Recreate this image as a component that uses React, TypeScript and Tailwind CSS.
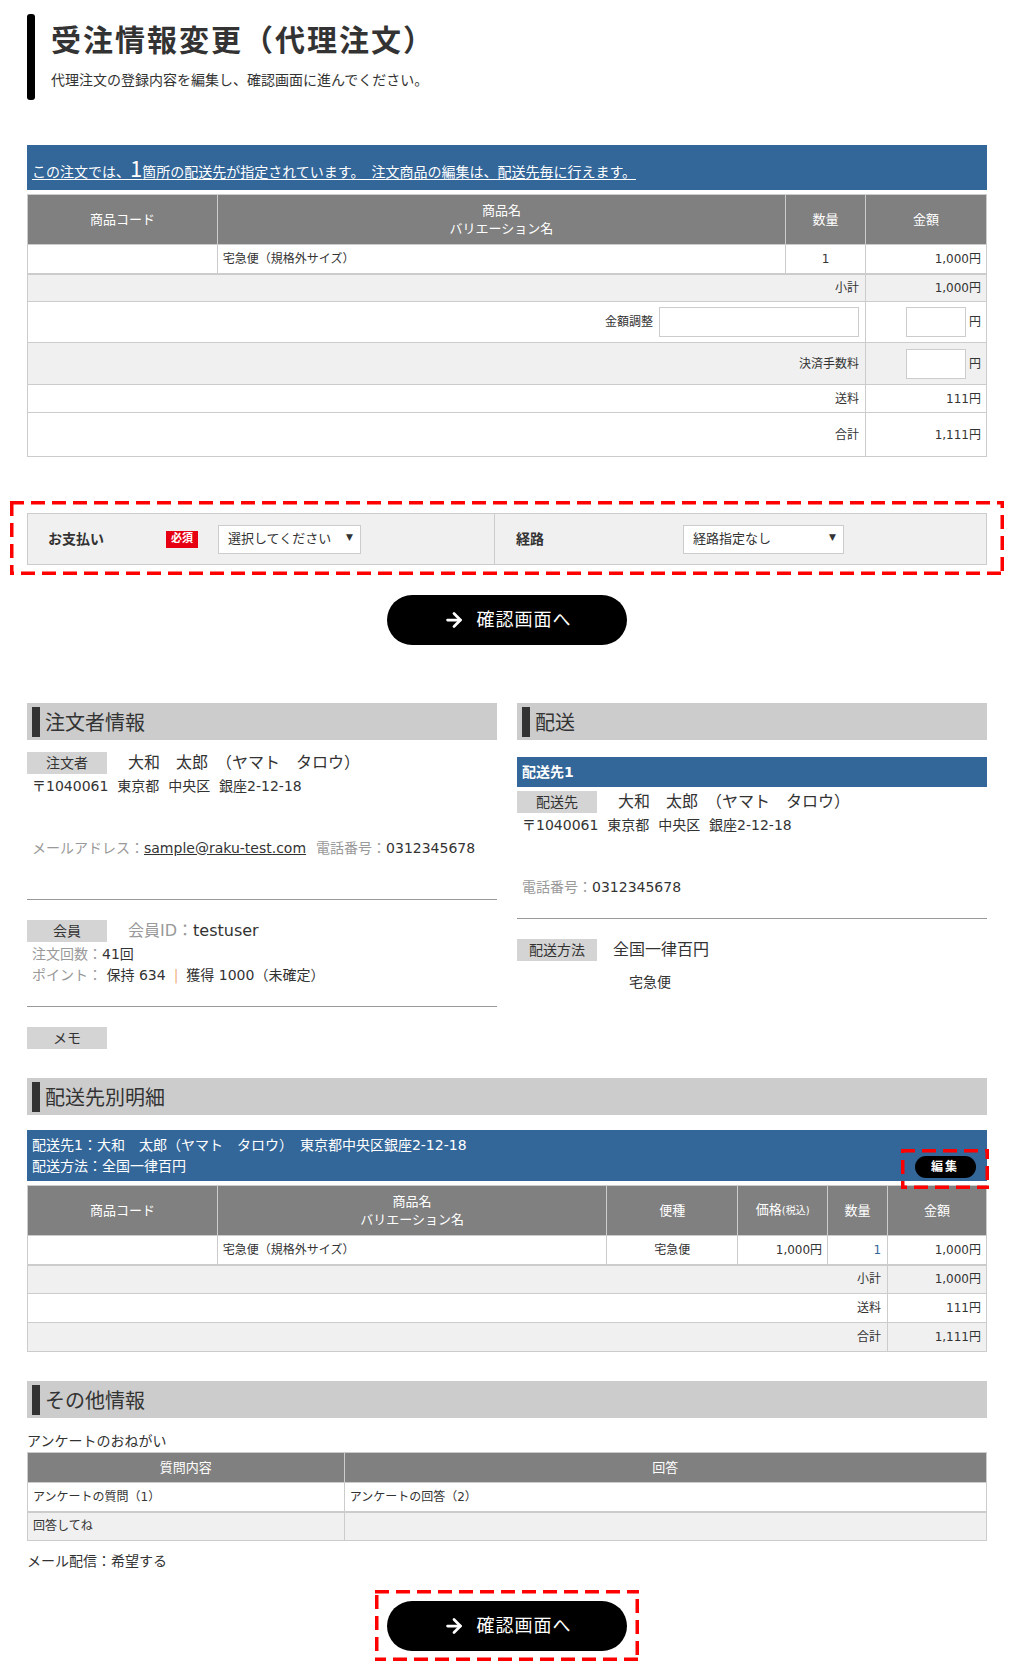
import { ArrowRight } from "lucide-react";
import type { ReactNode } from "react";

function SectionHeader({ title }: { title: string }) {
  return (
    <div className="flex h-[37px] items-center bg-[#cccccc] pl-[5px]">
      <div className="h-[30px] w-[8px] bg-[#333333]" />
      <h2 className="ml-[5px] font-['Noto_Sans_CJK_JP',sans-serif] text-[20px] font-normal leading-[30px] text-[#333333]">
        {title}
      </h2>
    </div>
  );
}

function LabelBox({ children }: { children: ReactNode }) {
  return (
    <div className="flex h-[22px] w-[80px] shrink-0 items-center justify-center bg-[#d4d4d4] text-[14px] leading-[22px] text-[#333333]">
      {children}
    </div>
  );
}

// 赤い点線の注記枠（position は className で指定）
function DashedFrame({ children, className }: { children: ReactNode; className: string }) {
  return (
    <div className={className}>
      {children}
      <svg className="pointer-events-none absolute inset-0 h-full w-full overflow-hidden">
        <rect width="100%" height="100%" fill="none" stroke="#ff0000" strokeWidth="7" strokeDasharray="14 7" />
      </svg>
    </div>
  );
}

function FakeSelect({ text, width }: { text: string; width: string }) {
  return (
    <div
      className={`relative flex h-[29px] items-center border border-[#cccccc] bg-white pl-[9px] text-[13px] text-[#333333] ${width}`}
    >
      {text}
      <span className="absolute right-[7px] top-[6px] text-[9px] leading-[10px]">▼</span>
    </div>
  );
}

function ConfirmButton() {
  return (
    <button className="flex h-[50px] w-[240px] items-center justify-center gap-[12px] rounded-full bg-black text-white">
      <ArrowRight size={22} strokeWidth={3} />
      <span className="text-[18px] leading-[24px] tracking-[1px]">確認画面へ</span>
    </button>
  );
}

export default function App() {
  return (
    <div className="min-h-screen bg-white font-['DejaVu_Sans','Noto_Sans_CJK_JP',sans-serif] text-[#333333]">
      <div className="ml-[27px] w-[960px] pt-[14px] pb-[20px]">

        {/* タイトル */}
        <div className="flex h-[86px]">
          <div className="w-[8px] rounded-[3px] bg-black" />
          <div className="pl-[16px]">
            <h1 className="pt-[9px] text-[30px] font-bold leading-[36px] tracking-[2px] text-[#333333]">
              受注情報変更（代理注文）
            </h1>
            <p className="mt-[11px] text-[14px] leading-[20px]">
              代理注文の登録内容を編集し、確認画面に進んでください。
            </p>
          </div>
        </div>

        {/* 案内 */}
        <div className="mt-[45px] flex h-[45px] items-end bg-[#336699] px-[5px] pb-[8px] font-['Noto_Sans_CJK_JP',sans-serif] text-[14px] leading-[22px] text-white">
          <span className="underline decoration-1 underline-offset-2">
            この注文では、<span className="text-[22px] leading-[22px]">1</span>
            箇所の配送先が指定されています。　注文商品の編集は、配送先毎に行えます。
          </span>
        </div>

        {/* 注文商品 */}
        <table className="mt-[4px] w-full border-collapse border border-[#cccccc] text-[12px] leading-[18px]">
          <colgroup>
            <col className="w-[190px]" />
            <col className="w-[569px]" />
            <col className="w-[80px]" />
            <col className="w-[121px]" />
          </colgroup>
          <thead>
            <tr className="h-[50px] bg-[#808080] text-[13px] text-white">
              <th className="border border-[#cccccc] font-normal">商品コード</th>
              <th className="border border-[#cccccc] font-normal">
                商品名
                <br />
                バリエーション名
              </th>
              <th className="border border-[#cccccc] font-normal">数量</th>
              <th className="border border-[#cccccc] font-normal">金額</th>
            </tr>
          </thead>
          <tbody>
            <tr className="h-[29px] bg-white">
              <td className="border border-b-2 border-[#cccccc]" />
              <td className="border border-b-2 border-[#cccccc] pl-[5px]">宅急便（規格外サイズ）</td>
              <td className="border border-b-2 border-[#cccccc] text-center">1</td>
              <td className="border border-b-2 border-[#cccccc] pr-[5px] text-right">1,000円</td>
            </tr>
            <tr className="h-[28px] bg-[#f0f0f0]">
              <td colSpan={3} className="border border-[#cccccc] pr-[6px] text-right">小計</td>
              <td className="border border-[#cccccc] pr-[5px] text-right">1,000円</td>
            </tr>
            <tr className="h-[41px] bg-white">
              <td colSpan={3} className="border border-[#cccccc] pr-[6px]">
                <div className="flex items-center justify-end gap-[6px]">
                  金額調整
                  <input className="h-[30px] w-[200px] border border-[#cccccc] bg-white outline-none" />
                </div>
              </td>
              <td className="border border-[#cccccc] pr-[5px]">
                <div className="flex items-center justify-end gap-[3px]">
                  <input className="h-[30px] w-[60px] border border-[#cccccc] bg-white outline-none" />
                  円
                </div>
              </td>
            </tr>
            <tr className="h-[42px] bg-[#f0f0f0]">
              <td colSpan={3} className="border border-[#cccccc] pr-[6px] text-right">決済手数料</td>
              <td className="border border-[#cccccc] pr-[5px]">
                <div className="flex items-center justify-end gap-[3px]">
                  <input className="h-[30px] w-[60px] border border-[#cccccc] bg-white outline-none" />
                  円
                </div>
              </td>
            </tr>
            <tr className="h-[28px] bg-white">
              <td colSpan={3} className="border border-[#cccccc] pr-[6px] text-right">送料</td>
              <td className="border border-[#cccccc] pr-[5px] text-right">111円</td>
            </tr>
            <tr className="h-[44px] bg-white">
              <td colSpan={3} className="border border-[#cccccc] pr-[6px] text-right">合計</td>
              <td className="border border-[#cccccc] pr-[5px] text-right">1,111円</td>
            </tr>
          </tbody>
        </table>

        {/* お支払い・経路 */}
        <DashedFrame className="relative mt-[44px] -ml-[17px] w-[994px] px-[17px] pt-[12px] pb-[10px]">
          <div className="grid h-[52px] grid-cols-[467px_1fr] border border-[#cccccc] bg-[#f0f0f0]">
            <div className="flex items-center border-r border-[#cccccc] pl-[20px]">
              <span className="w-[118px] text-[14px] font-bold">お支払い</span>
              <span className="flex h-[17px] w-[32px] items-center justify-center bg-[#e60012] text-[11px] font-bold text-white">
                必須
              </span>
              <div className="ml-[20px]">
                <FakeSelect text="選択してください" width="w-[143px]" />
              </div>
            </div>
            <div className="flex items-center pl-[21px]">
              <span className="w-[167px] text-[14px] font-bold">経路</span>
              <FakeSelect text="経路指定なし" width="w-[161px]" />
            </div>
          </div>
        </DashedFrame>

        <div className="mt-[20px] flex justify-center">
          <ConfirmButton />
        </div>

        {/* 注文者・配送 */}
        <div className="mt-[58px] grid grid-cols-2 gap-[20px]">
          <div>
            <SectionHeader title="注文者情報" />
            <div className="mt-[12px] flex items-center">
              <LabelBox>注文者</LabelBox>
              <span className="ml-[21px] text-[16px] leading-[22px]">大和　太郎　（ヤマト　タロウ）</span>
            </div>
            <p className="mt-[2px] pl-[5px] text-[14px] leading-[20px]">〒1040061&nbsp; 東京都&nbsp; 中央区&nbsp; 銀座2-12-18</p>
            <p className="mt-[42px] pl-[5px] text-[14px] leading-[20px]">
              <span className="text-[#999999]">メールアドレス：</span>
              <span className="underline">sample@raku-test.com</span>
              <span className="ml-[10px] text-[#999999]">電話番号：</span>
              0312345678
            </p>
            <div className="mt-[41px] border-t border-[#999999]" />
            <div className="mt-[20px] flex items-center">
              <LabelBox>会員</LabelBox>
              <span className="ml-[21px] text-[16px] leading-[22px]">
                <span className="text-[#999999]">会員ID：</span>testuser
              </span>
            </div>
            <p className="mt-[2px] pl-[5px] text-[14px] leading-[20px]">
              <span className="text-[#999999]">注文回数：</span>41回
            </p>
            <p className="mt-[1px] pl-[5px] text-[14px] leading-[20px]">
              <span className="text-[#999999]">ポイント：</span> 保持 634
              <span className="mx-[8px] text-[#f0b080]">|</span>
              獲得 1000（未確定）
            </p>
            <div className="mt-[21px] border-t border-[#999999]" />
            <div className="mt-[20px]">
              <LabelBox>メモ</LabelBox>
            </div>
          </div>

          <div>
            <SectionHeader title="配送" />
            <div className="mt-[17px] flex h-[30px] items-center bg-[#336699] pl-[5px] text-[14px] font-bold text-white">
              配送先1
            </div>
            <div className="mt-[4px] flex items-center">
              <LabelBox>配送先</LabelBox>
              <span className="ml-[21px] text-[16px] leading-[22px]">大和　太郎　（ヤマト　タロウ）</span>
            </div>
            <p className="mt-[2px] pl-[5px] text-[14px] leading-[20px]">〒1040061&nbsp; 東京都&nbsp; 中央区&nbsp; 銀座2-12-18</p>
            <p className="mt-[42px] pl-[5px] text-[14px] leading-[20px]">
              <span className="text-[#999999]">電話番号：</span>0312345678
            </p>
            <div className="mt-[21px] border-t border-[#999999]" />
            <div className="mt-[20px] flex items-center">
              <LabelBox>配送方法</LabelBox>
              <span className="ml-[16px] text-[16px] leading-[22px]">全国一律百円</span>
            </div>
            <p className="mt-[11px] pl-[112px] text-[14px] leading-[20px]">宅急便</p>
          </div>
        </div>

        {/* 配送先別明細 */}
        <div className="mt-[29px]">
          <SectionHeader title="配送先別明細" />
        </div>
        <div className="relative mt-[15px] h-[51px] bg-[#336699] px-[5px] pt-[5px] text-[14px] leading-[21px] text-white">
          <p>配送先1：大和　太郎（ヤマト　タロウ）　東京都中央区銀座2-12-18</p>
          <p>配送方法：全国一律百円</p>
          <DashedFrame className="absolute right-[-2px] bottom-[-8px] z-10 flex h-[40px] w-[88px] items-center justify-center">
            <button className="mt-[-4px] flex h-[22px] w-[61px] items-center justify-center rounded-full bg-black text-[12px] font-bold tracking-[2px] text-white">
              編集
            </button>
          </DashedFrame>
        </div>

        <table className="mt-[4px] w-full border-collapse border border-[#cccccc] text-[12px] leading-[18px]">
          <colgroup>
            <col className="w-[190px]" />
            <col className="w-[390px]" />
            <col className="w-[131px]" />
            <col className="w-[90px]" />
            <col className="w-[60px]" />
            <col className="w-[99px]" />
          </colgroup>
          <thead>
            <tr className="h-[50px] bg-[#808080] text-[13px] text-white">
              <th className="border border-[#cccccc] font-normal">商品コード</th>
              <th className="border border-[#cccccc] font-normal">
                商品名
                <br />
                バリエーション名
              </th>
              <th className="border border-[#cccccc] font-normal">便種</th>
              <th className="border border-[#cccccc] font-normal">
                価格<span className="text-[10px]">(税込)</span>
              </th>
              <th className="border border-[#cccccc] font-normal">数量</th>
              <th className="border border-[#cccccc] font-normal">金額</th>
            </tr>
          </thead>
          <tbody>
            <tr className="h-[29px] bg-white">
              <td className="border border-b-2 border-[#cccccc]" />
              <td className="border border-b-2 border-[#cccccc] pl-[5px]">宅急便（規格外サイズ）</td>
              <td className="border border-b-2 border-[#cccccc] text-center">宅急便</td>
              <td className="border border-b-2 border-[#cccccc] pr-[5px] text-right">1,000円</td>
              <td className="border border-b-2 border-[#cccccc] pr-[6px] text-right text-[#336699]">1</td>
              <td className="border border-b-2 border-[#cccccc] pr-[5px] text-right">1,000円</td>
            </tr>
            <tr className="h-[29px] bg-[#f0f0f0]">
              <td colSpan={5} className="border border-[#cccccc] pr-[6px] text-right">小計</td>
              <td className="border border-[#cccccc] pr-[5px] text-right">1,000円</td>
            </tr>
            <tr className="h-[29px] bg-white">
              <td colSpan={5} className="border border-[#cccccc] pr-[6px] text-right">送料</td>
              <td className="border border-[#cccccc] pr-[5px] text-right">111円</td>
            </tr>
            <tr className="h-[29px] bg-[#f0f0f0]">
              <td colSpan={5} className="border border-[#cccccc] pr-[6px] text-right">合計</td>
              <td className="border border-[#cccccc] pr-[5px] text-right">1,111円</td>
            </tr>
          </tbody>
        </table>

        {/* その他情報 */}
        <div className="mt-[29px]">
          <SectionHeader title="その他情報" />
        </div>
        <p className="mt-[13px] text-[14px] leading-[20px]">アンケートのおねがい</p>
        <table className="mt-[1px] w-full border-collapse border border-[#cccccc] text-[12px] leading-[18px]">
          <colgroup>
            <col className="w-[317px]" />
            <col className="w-[643px]" />
          </colgroup>
          <thead>
            <tr className="h-[30px] bg-[#808080] text-[13px] text-white">
              <th className="border border-[#cccccc] font-normal">質問内容</th>
              <th className="border border-[#cccccc] font-normal">回答</th>
            </tr>
          </thead>
          <tbody>
            <tr className="h-[29px] bg-white">
              <td className="border border-b-2 border-[#cccccc] pl-[5px]">アンケートの質問（1）</td>
              <td className="border border-b-2 border-[#cccccc] pl-[5px]">アンケートの回答（2）</td>
            </tr>
            <tr className="h-[29px] bg-[#f0f0f0]">
              <td className="border border-[#cccccc] pl-[5px]">回答してね</td>
              <td className="border border-[#cccccc]" />
            </tr>
          </tbody>
        </table>
        <p className="mt-[10px] text-[14px] leading-[20px]">メール配信：希望する</p>

        <div className="mt-[19px] flex justify-center">
          <DashedFrame className="relative px-[12px] pt-[11px] pb-[10px]">
            <ConfirmButton />
          </DashedFrame>
        </div>
      </div>
    </div>
  );
}
